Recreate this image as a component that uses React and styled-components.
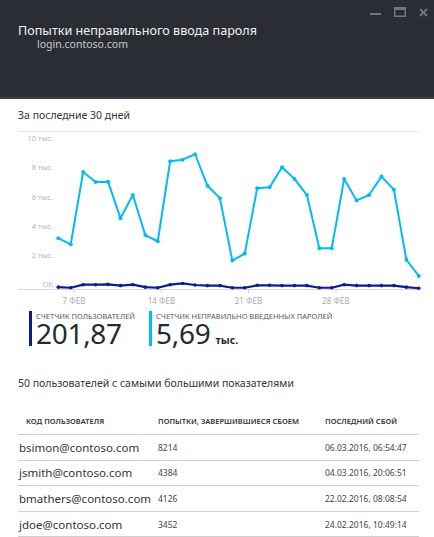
import styled, { createGlobalStyle } from "styled-components";

const GlobalStyle = createGlobalStyle`
  body {
    margin: 0;
    background: #fff;
    font-family: "Noto Sans", "Open Sans", sans-serif;
    color: #2b2b2b;
  }
`;

const Page = styled.div`
  width: 434px;
  height: 537px;
  overflow: hidden;
  background: #fff;
`;

const Header = styled.header`
  height: 99px;
  box-sizing: border-box;
  background: #2a2e34;
  border-bottom: 2px solid #3d4147;
  padding: 7px 6px 0 18px;
  display: flex;
  align-items: flex-start;
`;

const TitleBlock = styled.div`
  flex: 1;
  padding-top: 16px;
`;

const Title = styled.div`
  color: #f2f2f2;
  font-size: 12.6px;
  line-height: 15px;
`;

const Subtitle = styled.div`
  color: #c8c9cb;
  font-size: 10.5px;
  line-height: 12px;
  padding-left: 19px;
`;

const Controls = styled.div`
  display: flex;
  gap: 13px;
  align-items: center;
`;

const Body = styled.main`
  padding: 0 15px 0 18px;
`;

const Heading = styled.div`
  font-size: 10.5px;
  line-height: 16px;
  margin-top: 8px;
  color: #333;
`;

const ChartSvg = styled.svg`
  display: block;
  margin-left: -18px;
`;

const Metrics = styled.div`
  display: flex;
  gap: 14px;
  margin-top: 2px;
  padding-left: 11px;
`;

const Metric = styled.div`
  border-left: 3px solid ${(p) => p.$color};
  padding-left: 4px;
  min-width: ${(p) => p.$width || 0}px;
  box-sizing: border-box;
`;

const MetricLabel = styled.div`
  font-size: 7.5px;
  line-height: 10px;
  color: #555;
  text-transform: uppercase;
`;

const MetricValue = styled.div`
  font-size: 28px;
  line-height: 25px;
  height: 25px;
  color: #252a33;
  letter-spacing: -0.3px;
`;

const Unit = styled.span`
  font-size: 10.5px;
  line-height: 1;
  font-weight: 700;
  letter-spacing: 0;
  margin-left: 5px;
`;

const SubHeading = styled.div`
  font-size: 10.5px;
  line-height: 16px;
  margin-top: 29px;
  color: #333;
`;

const Table = styled.div`
  margin-top: 15px;
  width: 401px;
`;

const Row = styled.div`
  display: grid;
  grid-template-columns: 140px 167px 1fr;
  align-items: center;
  height: ${(p) => (p.$head ? 29 : 25.6)}px;
  border-bottom: 1px solid #cfcfcf;
  box-sizing: border-box;
`;

const HeadCell = styled.div`
  font-size: 7.5px;
  font-weight: 600;
  color: #333;
  padding-left: ${(p) => (p.$first ? 8 : 0)}px;
  padding-top: 1px;
`;

const Email = styled.div`
  font-size: 11.5px;
  color: #333;
  padding-left: 1px;
`;

const Small = styled.div`
  font-size: 8.5px;
  color: #444;
`;

const light = [
  3.3, 2.9, 7.6, 6.95, 6.97, 4.6, 6.1, 3.5, 3.1, 8.3, 8.4, 8.75, 6.7, 5.9,
  1.85, 2.3, 6.55, 6.6, 7.9, 7.15, 6.1, 2.65, 2.65, 7.15, 5.75, 6.1, 7.3,
  6.45, 1.9, 0.85,
];
const dark = [
  0.12, 0.08, 0.28, 0.28, 0.3, 0.22, 0.28, 0.12, 0.08, 0.28, 0.36, 0.26,
  0.22, 0.22, 0.08, 0.08, 0.24, 0.24, 0.22, 0.22, 0.22, 0.08, 0.08, 0.28,
  0.22, 0.22, 0.22, 0.22, 0.12, 0.05,
];

const x0 = 58.3;
const step = 12.43;
const yOf = (v) => 291 - v * 15.4;

function pts(data) {
  return data.map((v, i) => [x0 + i * step, yOf(v)]);
}

function Series({ data, color, r, width }) {
  const p = pts(data);
  return (
    <g>
      <polyline
        points={p.map(([x, y]) => `${x},${y}`).join(" ")}
        fill="none"
        stroke={color}
        strokeWidth={width}
        strokeLinejoin="round"
      />
      {p.map(([x, y], i) => (
        <circle key={i} cx={x} cy={y} r={r} fill={color} />
      ))}
    </g>
  );
}

const yLabels = [
  ["10 тыс.", 140],
  ["8 тыс.", 169],
  ["6 тыс.", 199],
  ["4 тыс.", 228],
  ["2 тыс.", 257],
  ["ОК", 286],
];
const xLabels = [
  ["7 ФЕВ", 74],
  ["14 ФЕВ", 161.5],
  ["21 ФЕВ", 248.5],
  ["28 ФЕВ", 336],
];

function Chart() {
  return (
    <ChartSvg width="434" height="186" viewBox="0 125 434 186">
      <line x1="18" y1="133.5" x2="419" y2="133.5" stroke="#e6e6e6" />
      <line x1="18" y1="291.5" x2="419" y2="291.5" stroke="#d8d8d8" />
      {yLabels.map(([t, y]) => (
        <text
          key={t}
          x="53"
          y={y + 3}
          textAnchor="end"
          fontSize="7.5"
          fill="#b3b3b3"
          fontFamily="Noto Sans, sans-serif"
        >
          {t}
        </text>
      ))}
      {xLabels.map(([t, x]) => (
        <g key={t}>
          <line x1={x} y1="291" x2={x} y2="295" stroke="#d0d0d0" />
          <text
            x={x}
            y="306"
            textAnchor="middle"
            fontSize="8"
            fill="#aaa"
            fontFamily="Noto Sans, sans-serif"
          >
            {t}
          </text>
        </g>
      ))}
      <Series data={light} color="#00bcf2" r={2} width={2} />
      <Series data={dark} color="#0c1d8e" r={1.8} width={2.2} />
    </ChartSvg>
  );
}

const rows = [
  ["bsimon@contoso.com", "8214", "06.03.2016, 06:54:47"],
  ["jsmith@contoso.com", "4384", "04.03.2016, 20:06:51"],
  ["bmathers@contoso.com", "4126", "22.02.2016, 08:08:54"],
  ["jdoe@contoso.com", "3452", "24.02.2016, 10:49:14"],
];

export default function App() {
  return (
    <Page>
      <GlobalStyle />
      <Header>
        <TitleBlock>
          <Title>Попытки неправильного ввода пароля</Title>
          <Subtitle>login.contoso.com</Subtitle>
        </TitleBlock>
        <Controls>
          <svg width="11" height="10" viewBox="0 0 11 10">
            <rect x="0" y="6" width="11" height="2" fill="#74777c" />
          </svg>
          <svg width="12" height="10" viewBox="0 0 12 10">
            <rect x="0.75" y="0.75" width="10.5" height="8.5" fill="none" stroke="#74777c" strokeWidth="1.5" />
            <rect x="0" y="0" width="12" height="3" fill="#74777c" />
          </svg>
          <svg width="9" height="9" viewBox="0 0 9 9">
            <path d="M1 1 L8 8 M8 1 L1 8" stroke="#74777c" strokeWidth="1.8" />
          </svg>
        </Controls>
      </Header>
      <Body>
        <Heading>За последние 30 дней</Heading>
        <Chart />
        <Metrics>
          <Metric $color="#0c1d8e" $width={101}>
            <MetricLabel>Счетчик пользователей</MetricLabel>
            <MetricValue>201,87</MetricValue>
          </Metric>
          <Metric $color="#00bcf2">
            <MetricLabel>Счетчик неправильно введенных паролей</MetricLabel>
            <MetricValue>
              5,69<Unit>тыс.</Unit>
            </MetricValue>
          </Metric>
        </Metrics>
        <SubHeading>50 пользователей с самыми большими показателями</SubHeading>
        <Table>
          <Row $head>
            <HeadCell $first>КОД ПОЛЬЗОВАТЕЛЯ</HeadCell>
            <HeadCell>ПОПЫТКИ, ЗАВЕРШИВШИЕСЯ СБОЕМ</HeadCell>
            <HeadCell>ПОСЛЕДНИЙ СБОЙ</HeadCell>
          </Row>
          {rows.map(([e, n, d]) => (
            <Row key={e}>
              <Email>{e}</Email>
              <Small>{n}</Small>
              <Small>{d}</Small>
            </Row>
          ))}
        </Table>
      </Body>
    </Page>
  );
}
